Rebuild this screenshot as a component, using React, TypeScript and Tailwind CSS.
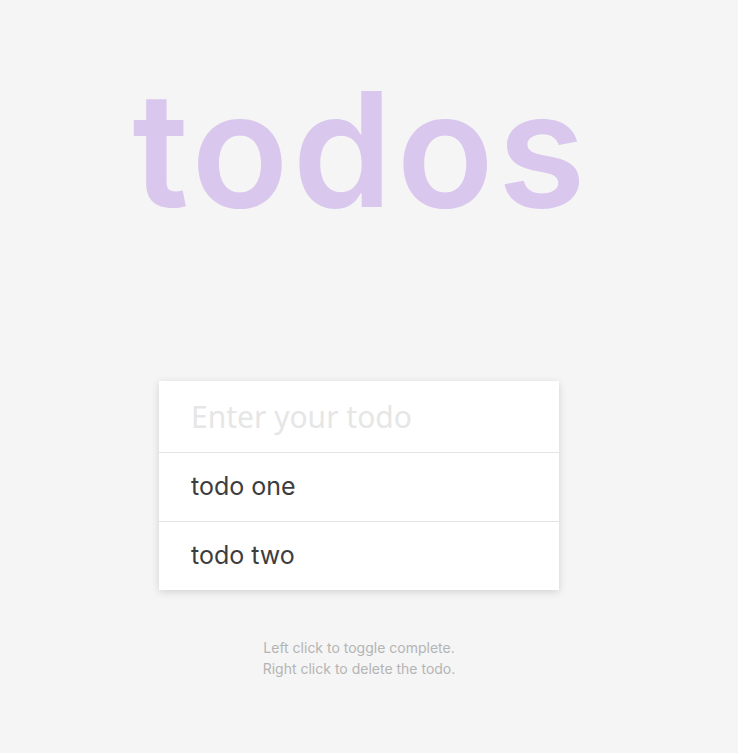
import { useState } from "react";

type Todo = { id: number; text: string; done: boolean };

export default function App() {
  const [text, setText] = useState("");
  const [todos, setTodos] = useState<Todo[]>([
    { id: 1, text: "todo one", done: false },
    { id: 2, text: "todo two", done: false },
  ]);

  const handleSubmit = (e: React.FormEvent) => {
    e.preventDefault();
    if (!text.trim()) return;
    setTodos([...todos, { id: Date.now(), text, done: false }]);
    setText("");
  };

  return (
    <div className="min-h-[753px] bg-[#f5f5f5] font-['Inter',sans-serif]">
      <div className="w-[718px] flex flex-col items-center">
        <h1 className="mt-[49px] h-[200px] pl-[4px] text-[160px] leading-[200px] font-semibold tracking-[4px] text-[#dac7ed]">
          todos
        </h1>

        <form
          onSubmit={handleSubmit}
          className="mt-[132px] w-[400px] bg-white shadow-[0_2px_8px_rgba(0,0,0,0.14)]"
        >
          <input
            type="text"
            value={text}
            onChange={(e) => setText(e.target.value)}
            placeholder="Enter your todo"
            className="block w-full h-[72px] px-[32px] text-[30px] font-['Noto_Sans',sans-serif] text-[#444] placeholder:text-[#e6e6e6] outline-none border-b border-[#e4e4e4]"
          />
          <ul>
            {todos.map((todo, i) => (
              <li
                key={todo.id}
                onClick={() =>
                  setTodos(
                    todos.map((t) =>
                      t.id === todo.id ? { ...t, done: !t.done } : t
                    )
                  )
                }
                onContextMenu={(e) => {
                  e.preventDefault();
                  setTodos(todos.filter((t) => t.id !== todo.id));
                }}
                className={
                  "px-[32px] flex items-center text-[25px] text-[#3d3d3d] cursor-pointer " +
                  (i < todos.length - 1 ? "h-[69px] border-b border-[#e4e4e4] " : "h-[68px] ") +
                  (todo.done ? "line-through text-[#b5b5b5]" : "")
                }
              >
                {todo.text}
              </li>
            ))}
          </ul>
        </form>

        <div className="mt-[47px] text-center text-[14px] leading-[21px] text-[#b4b4b4]">
          <p>Left click to toggle complete.</p>
          <p>Right click to delete the todo.</p>
        </div>
      </div>
    </div>
  );
}
